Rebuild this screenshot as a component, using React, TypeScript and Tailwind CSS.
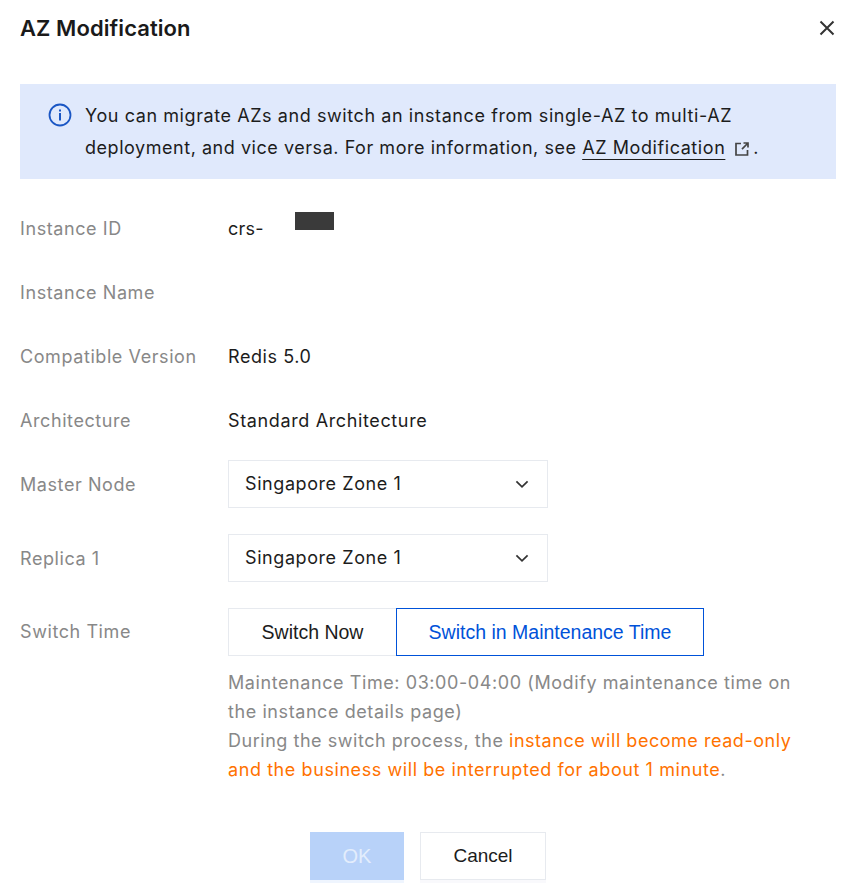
import React from "react";

const inter = "font-['Inter',sans-serif]";

function Chevron() {
  return (
    <svg width="16" height="16" viewBox="0 0 16 16" fill="none" className="text-[#333]">
      <path d="M2.4 5.300 8 10.900l5.600-5.600" stroke="currentColor" strokeWidth="1.700" />
    </svg>
  );
}

function Select() {
  return (
    <div className="flex h-[48px] w-[320px] items-center justify-between border border-[#e7eaef] pl-4 pr-[17px] text-[#1c1c1c]">
      <span>Singapore Zone 1</span>
      <Chevron />
    </div>
  );
}

function Row({ label, children }: { label: string; children?: React.ReactNode }) {
  return (
    <div className="flex h-[64px] items-center">
      <div className="w-[208px] shrink-0 pt-[2px] text-[#888]">{label}</div>
      {children}
    </div>
  );
}

export default function App() {
  return (
    <div className={`${inter} relative h-[896px] w-[858px] overflow-hidden bg-white text-[18px] leading-[28px] tracking-[0.58px] text-[#1c1c1c]`}>
      <div className="flex h-[84px] items-start justify-between pl-5 pr-[22px] pt-[13px]">
        <h1 className="text-[22px] font-semibold leading-[30px] tracking-[0.07px] text-[#1a1a1a]">AZ Modification</h1>
        <svg width="18" height="18" viewBox="0 0 18 18" fill="none" className="mt-[6px]">
          <path d="M2.5 2.5 15.500 15.500M15.500 2.500 2.500 15.500" stroke="#333" strokeWidth="2" />
        </svg>
      </div>

      <div className="ml-5 mr-[22px] flex h-[95px] gap-[13px] bg-[#e0e9fc] pl-[28px] pt-[16px] leading-[32px] text-[#1c1c1c]">
        <svg width="24" height="24" viewBox="0 0 24 24" fill="none" className="mt-[3px] shrink-0">
          <circle cx="12" cy="12" r="10.500" stroke="#1a56c4" strokeWidth="1.800" />
          <rect x="11" y="6.500" width="2" height="2" fill="#1a56c4" />
          <rect x="11" y="10" width="2" height="7.500" fill="#1a56c4" />
        </svg>
        <p>
          You can migrate AZs and switch an instance from single-AZ to multi-AZ
          <br />
          <span className="tracking-[0.54px]">deployment, and vice versa. For more information, see </span>
          <span className="underline decoration-[1px] underline-offset-[5px]">AZ Modification</span>
          <svg width="16" height="16" viewBox="0 0 16 16" fill="none" className="ml-[9px] mr-[3px] inline-block align-[-3px]">
            <path d="M7 2.500H2v11.500h11.500V9" stroke="#444" strokeWidth="1.700" />
            <path d="M8 8.200 13.500 2.500M9.500 2H14v4.500" stroke="#444" strokeWidth="1.700" />
          </svg>
          .
        </p>
      </div>

      <div className="px-5 pt-[17px]">
        <Row label="Instance ID">
          <div className="relative pt-[2px] tracking-[0.2px]">
            crs-
            <div className="absolute left-[67px] top-[-1px] h-[18px] w-[39px] bg-[#3a3a3a]" />
          </div>
        </Row>
        <Row label="Instance Name" />
        <Row label="Compatible Version">
          <span className="pt-[2px]">Redis 5.0</span>
        </Row>
        <Row label="Architecture">
          <span className="pt-[2px] tracking-[0.63px]">Standard Architecture</span>
        </Row>
        <Row label="Master Node">
          <Select />
        </Row>
        <div className="mt-[10px]">
          <Row label="Replica 1">
            <Select />
          </Row>
        </div>
        <div className="mt-[10px] flex h-[64px] items-center">
          <div className="w-[208px] shrink-0 text-[#888]">Switch Time</div>
          <div className="flex h-[48px] font-['Liberation_Sans',sans-serif] text-[19.5px] leading-[26px] tracking-normal">
            <div className="flex w-[168px] items-center justify-center border border-r-0 border-[#e7eaef] text-[#1c1c1c]">Switch Now</div>
            <div className="flex w-[308px] items-center justify-center border border-[#0052d9] text-[#0052d9]">Switch in Maintenance Time</div>
          </div>
        </div>
        <div className="ml-[208px] mt-[4px] w-[600px] leading-[29px] text-[#888]">
          Maintenance Time: 03:00-04:00 (Modify maintenance time on
          <br />
          the instance details page)
          <br />
          <span className="tracking-[0.53px]">During the switch process, the </span>
          <span className="tracking-[0.53px] text-[#ff7200]">instance will become read-only</span>
          <br />
          <span className="text-[#ff7200]">and the business will be interrupted for about 1 minute</span>.
        </div>
      </div>

      <div className="mt-[48px] flex justify-center gap-4 pr-[2px] font-['Liberation_Sans',sans-serif] tracking-normal">
        <div className="flex h-[48px] w-[94px] items-center justify-center bg-[#b8d2f9] text-[20px] text-[#e3edfc] shadow-[0_3px_0_#eff5fe]">OK</div>
        <div className="flex h-[48px] w-[126px] items-center justify-center border border-[#e7eaef] text-[19px] text-[#1c1c1c] shadow-[0_3px_0_#f9f9fc]">Cancel</div>
      </div>
    </div>
  );
}
